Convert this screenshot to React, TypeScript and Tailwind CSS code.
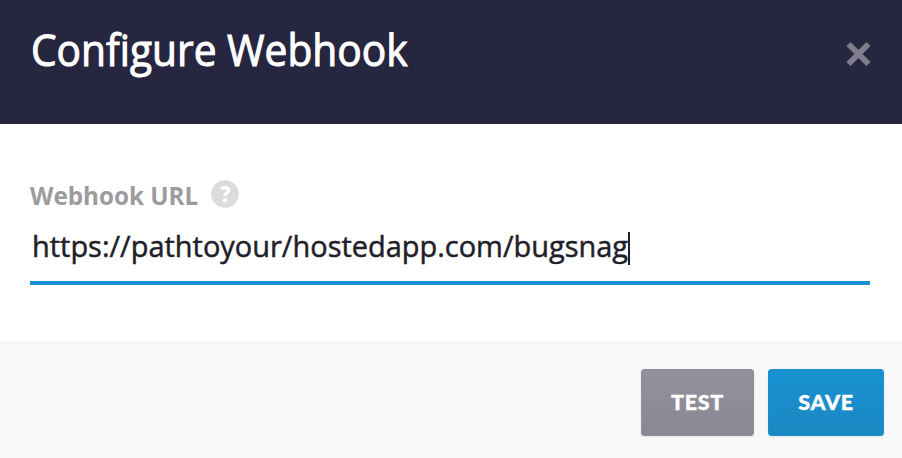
export default function App() {
  return (
    <div className="flex h-[458px] w-[902px] flex-col overflow-hidden bg-white font-['Open_Sans','Noto_Sans',sans-serif]">
      <header className="flex h-[124px] items-start justify-between bg-[#272641] pl-[31px] pr-[30px]">
        <h1 className="mt-[20px] origin-left scale-x-[0.946] whitespace-nowrap text-[43px] leading-[60px] text-white [-webkit-text-stroke:1px_white]">
          Configure Webhook
        </h1>
        <button aria-label="Close" className="mt-[41px]">
          <svg width="27" height="26" viewBox="0 0 27 26" fill="none" stroke="#807e8d" strokeWidth="5.8">
            <path d="M3.5 3L23.5 23M23.5 3L3.5 23" />
          </svg>
        </button>
      </header>
      <main className="h-[217px] pl-[30px] pr-[32px] pt-[54px]">
        <div className="flex h-[34px] items-center">
          <label className="w-[181px] origin-left scale-x-[0.95] whitespace-nowrap text-[25.5px] font-bold leading-[34px] text-[#9c9ca0]">
            Webhook URL
          </label>
          <svg className="-mt-[2px]" width="28" height="28" viewBox="0 0 28 28">
            <circle cx="14" cy="14" r="13.8" fill="#dcdcdc" />
            <path d="M9.8 8.9Q12 7.6 14.1 7.6Q17.6 7.7 17.6 10.4Q17.6 12.2 15.6 13.2Q14 14 14 16" fill="none" stroke="white" strokeWidth="3.4" />
            <circle cx="14" cy="20.2" r="2.2" fill="white" />
          </svg>
        </div>
        <div className="flex h-[73px] items-start border-b-4 border-[#1991d0] pl-[2px] pt-[14px]">
          <div className="w-[596px]">
            <span className="inline-block origin-left scale-x-[0.965] whitespace-nowrap text-[30px] leading-[40px] text-[#1f1e29] [-webkit-text-stroke:0.5px_#1f1e29]">
              https://pathtoyour/hostedapp.com/bugsnag
            </span>
          </div>
          <span className="mt-[6px] h-[33px] w-[2px] shrink-0 bg-[#1f1e29]" />
        </div>
      </main>
      <footer className="flex h-[117px] justify-end gap-[14px] bg-[#f8f8f8] pr-[18px] pt-[28px] font-['Lato',sans-serif] text-[21.5px] font-black tracking-[0.7px] text-white [-webkit-text-stroke:0.4px_white]">
        <button className="h-[67px] w-[113px] rounded-[3px] border border-[#918f9b] bg-linear-to-b from-[#93919d] to-[#8a8893] shadow-[0_1px_2px_rgba(0,0,0,0.08)]">
          TEST
        </button>
        <button className="h-[67px] w-[116px] rounded-[3px] border border-[#1991d0] bg-linear-to-b from-[#1991d0] to-[#1a89c3] shadow-[0_1px_2px_rgba(0,0,0,0.08)]">
          SAVE
        </button>
      </footer>
    </div>
  );
}
